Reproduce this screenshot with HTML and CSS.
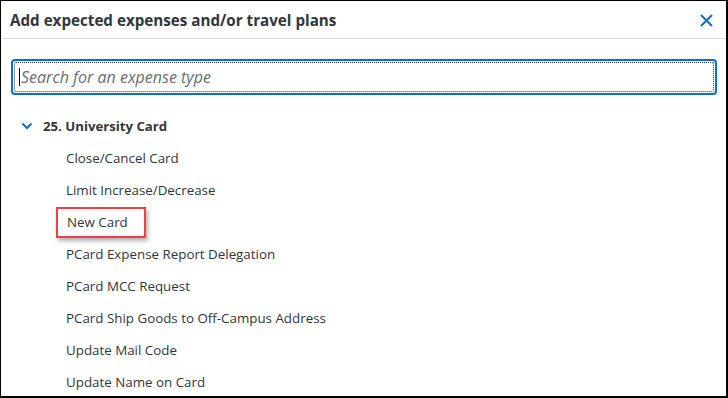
FILE: index.html
```html
<!DOCTYPE html>
<html lang="en">
<head>
    <meta charset="UTF-8">
    <meta name="viewport" content="width=device-width, initial-scale=1.0">
    <title>Add expected expenses and/or travel plans</title>
    <link rel="stylesheet" href="styles.css">
</head>
<body>
    <div class="dialog">
        <header class="dialog-header">
            <h1>Add expected expenses and/or travel plans</h1>
            <button class="close-btn" aria-label="Close">
                <svg width="13" height="13" viewBox="0 0 13 13">
                    <path d="M1 1 L12 12 M12 1 L1 12" stroke="#0a6ed1" stroke-width="2" fill="none"/>
                </svg>
            </button>
        </header>

        <div class="search">
            <div class="search-box">
                <span class="caret"></span>
                <span class="placeholder">Search for an expense type</span>
            </div>
        </div>

        <div class="group">
            <div class="group-title">
                <svg class="chevron" width="12" height="8" viewBox="0 0 12 8">
                    <path d="M1.5 1.5 L6 6 L10.5 1.5" stroke="#0a6ed1" stroke-width="2" fill="none"/>
                </svg>
                <span>25. University Card</span>
            </div>
            <ul class="items">
                <li>Close/Cancel Card</li>
                <li>Limit Increase/Decrease</li>
                <li><span class="highlight">New Card</span></li>
                <li>PCard Expense Report Delegation</li>
                <li>PCard MCC Request</li>
                <li>PCard Ship Goods to Off-Campus Address</li>
                <li>Update Mail Code</li>
                <li>Update Name on Card</li>
            </ul>
        </div>
    </div>
</body>
</html>
```

FILE: styles.css
```css
body {
    margin: 0;
    font-family: "Open Sans", Arial, sans-serif;
    color: #32363a;
    background-color: white;
}

.dialog {
    width: 728px;
    height: 398px;
    box-sizing: border-box;
    border-style: solid;
    border-color: #000;
    border-width: 1px 2px 2px 1px;
    overflow: hidden;
}

.dialog-header {
    height: 37px;
    border-bottom: 1px solid #d9d9d9;
    display: flex;
    align-items: center;
    justify-content: space-between;
    padding: 0 13px 0 9px;
}

.dialog-header h1 {
    margin: 0;
    font-size: 15.2px;
    font-weight: 700;
    color: #32363a;
}

.close-btn {
    background: none;
    border: none;
    padding: 0;
    display: flex;
    margin-top: 2px;
}

.search {
    padding: 20px 9px 0 10px;
}

.search-box {
    height: 36px;
    box-sizing: border-box;
    border: 2px solid #0a6ed1;
    border-radius: 4px;
    position: relative;
    display: flex;
    align-items: center;
    padding-left: 6px;
}

.search-box::after {
    content: "";
    position: absolute;
    inset: 1px;
    border: 1px dotted #333;
    border-radius: 2px;
}

.caret {
    width: 1px;
    height: 18px;
    background-color: #000;
    margin-right: 1px;
}

.placeholder {
    font-style: italic;
    font-size: 16px;
    color: #6a6d70;
}

.group {
    padding-top: 15px;
}

.group-title {
    height: 32px;
    display: flex;
    align-items: center;
    padding-left: 20px;
    font-size: 13.2px;
    font-weight: 700;
}

.chevron {
    margin-right: 10px;
}

.items {
    list-style: none;
    margin: 0;
    padding: 0 0 0 65px;
}

.items li {
    height: 32px;
    line-height: 32px;
    font-size: 13.35px;
}

.highlight {
    display: inline-block;
    line-height: 27px;
    border: 2px solid #ef4145;
    padding: 0 16px 0 9px;
    margin-left: -10px;
    box-shadow: 2px 3px 4px rgba(0, 0, 0, 0.3);
}
```
